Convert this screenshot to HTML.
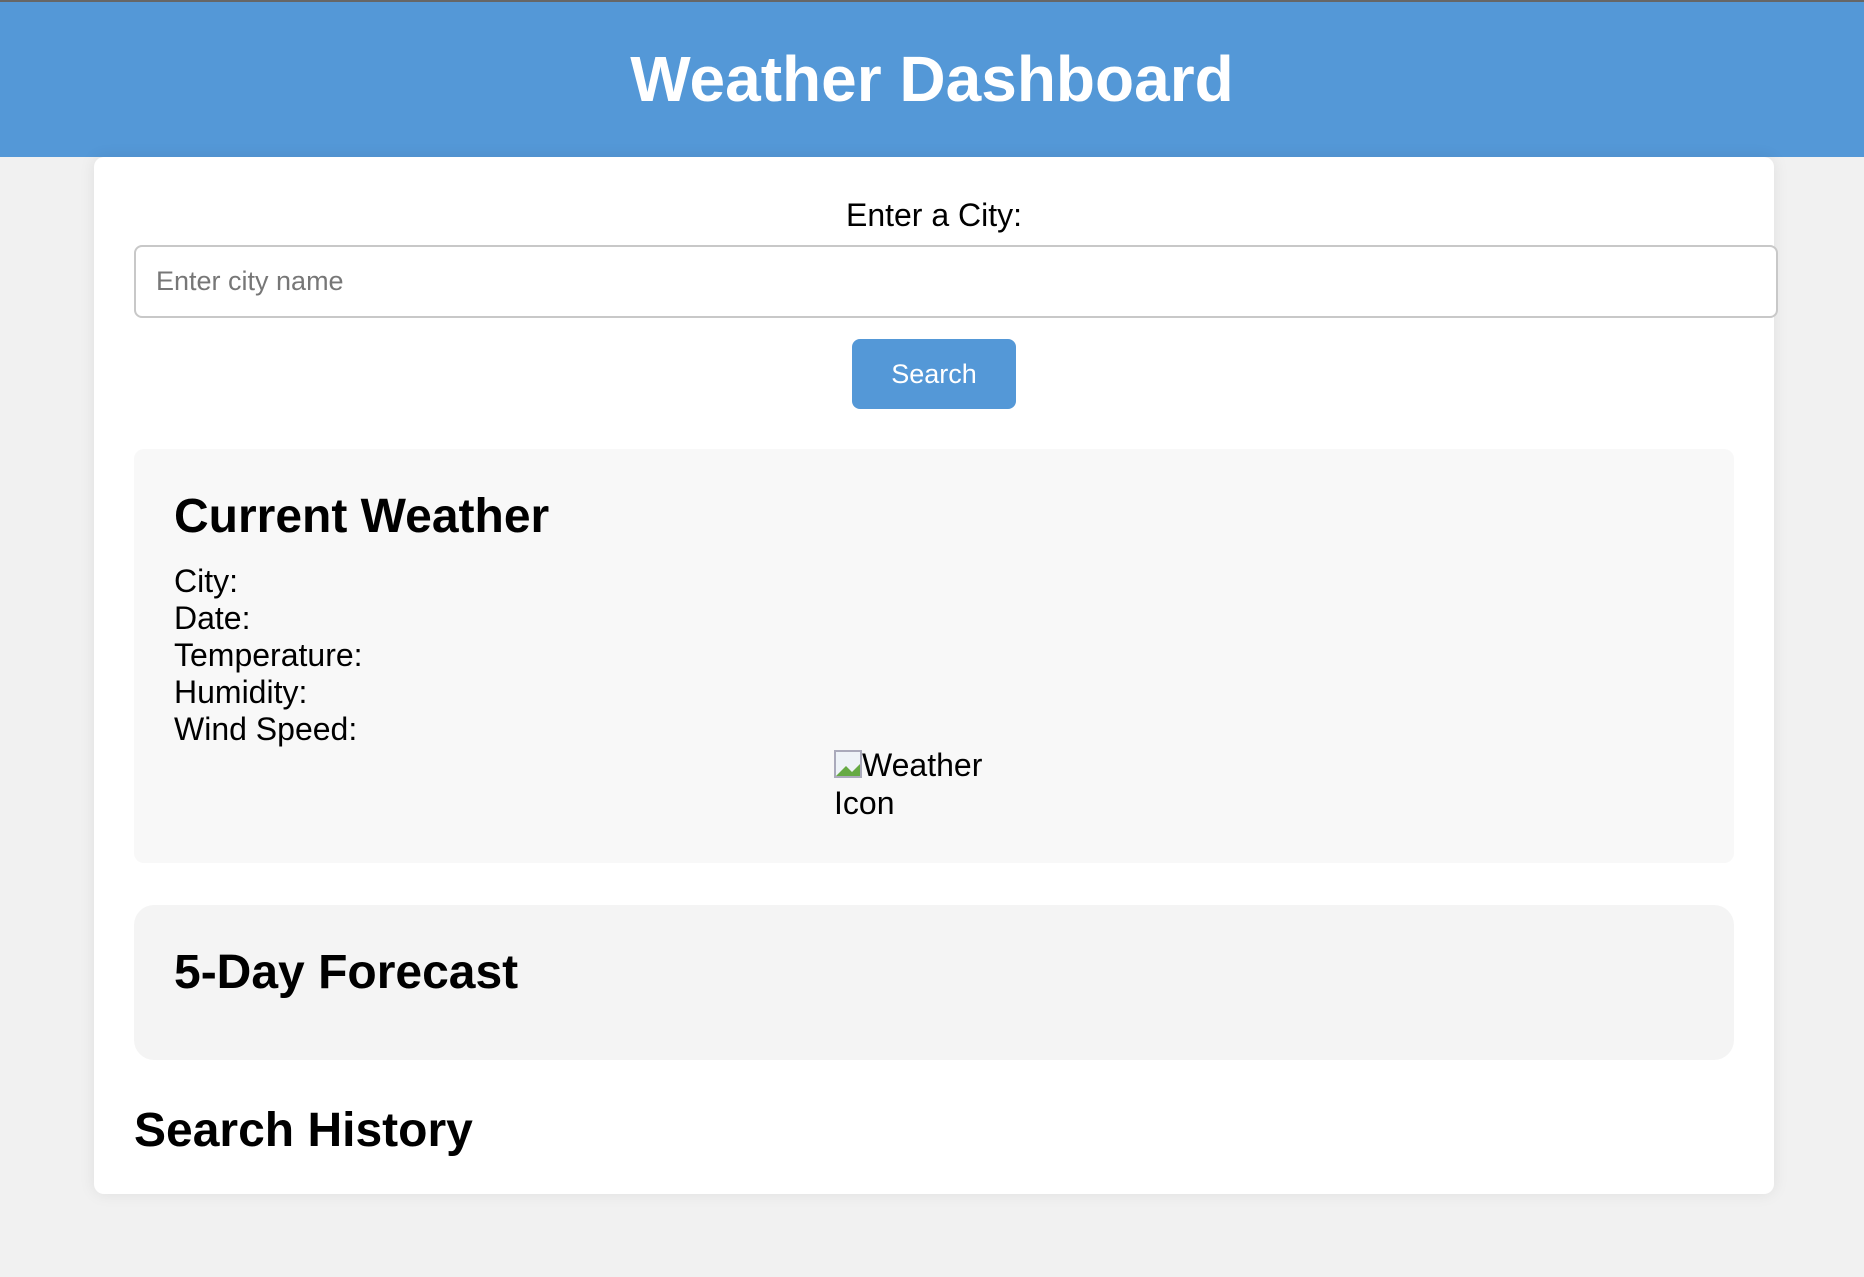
<!DOCTYPE html>
<html><head><meta charset="utf-8"><style>
html{zoom:2}
body{margin:0;background:#f1f1f1;font-family:"Liberation Sans",Arial,sans-serif;color:#000;width:932px;height:638.5px;overflow:hidden}
header{background:#5498d7;height:78.5px;border-top:1px solid #666;box-sizing:border-box;text-align:center}
header h1{margin:0;color:#fff;font-size:32px;line-height:77px;font-weight:bold}
.c{position:absolute;left:47px;top:78.5px;width:800px;padding:20px;background:#fff;border-radius:5px;box-shadow:0 0 8px rgba(0,0,0,0.08);height:478.5px}
label{display:block;text-align:center;font-size:16px;line-height:18.4px;height:18.4px}
input{display:block;margin-top:5.5px;width:822px;height:36.5px;box-sizing:border-box;border:1px solid #c8c8c8;border-radius:4px;padding:0 10px;font-size:13.5px;font-family:inherit;background:#fff}
input::placeholder{color:#777}
.btn{display:block;margin:10.8px auto 0;width:82px;height:35px;background:#5498d7;color:#fff;border:0;border-radius:4px;font-size:13.5px;font-family:inherit}
.box{background:#f8f8f8;border-radius:5px;padding:20px;margin-top:20px}
h2{margin:0;font-size:24px;line-height:27.6px;font-weight:bold}
.l{font-size:16px;line-height:18.4px}
.ic{width:100px;margin:0 auto;font-size:16px;line-height:18.8px;display:block}
.f{background:#f4f4f4;border-radius:10px;padding:20px 20px 29.8px;margin-top:21px}
</style></head><body>
<header><h1>Weather Dashboard</h1></header>
<div class="c">
<label>Enter a City:</label>
<input placeholder="Enter city name">
<button class="btn">Search</button>
<div class="box" style="height:167px">
<h2>Current Weather</h2>
<div style="margin-top:9.4px" class="l">City:<br>Date:<br>Temperature:<br>Humidity:<br>Wind Speed:</div>
<span class="ic"><svg width="14" height="14" style="vertical-align:-1px"><rect x="0.5" y="0.5" width="13" height="13" fill="#eef3f8" stroke="#aab"/><path d="M1 13 L6 8 L9 11 L13 7 L13 13Z" fill="#6a4"/></svg>Weather<br>Icon</span>
</div>
<div class="f"><h2>5-Day Forecast</h2></div>
<h2 style="margin-top:21.2px">Search History</h2>
</div>
</body></html>
